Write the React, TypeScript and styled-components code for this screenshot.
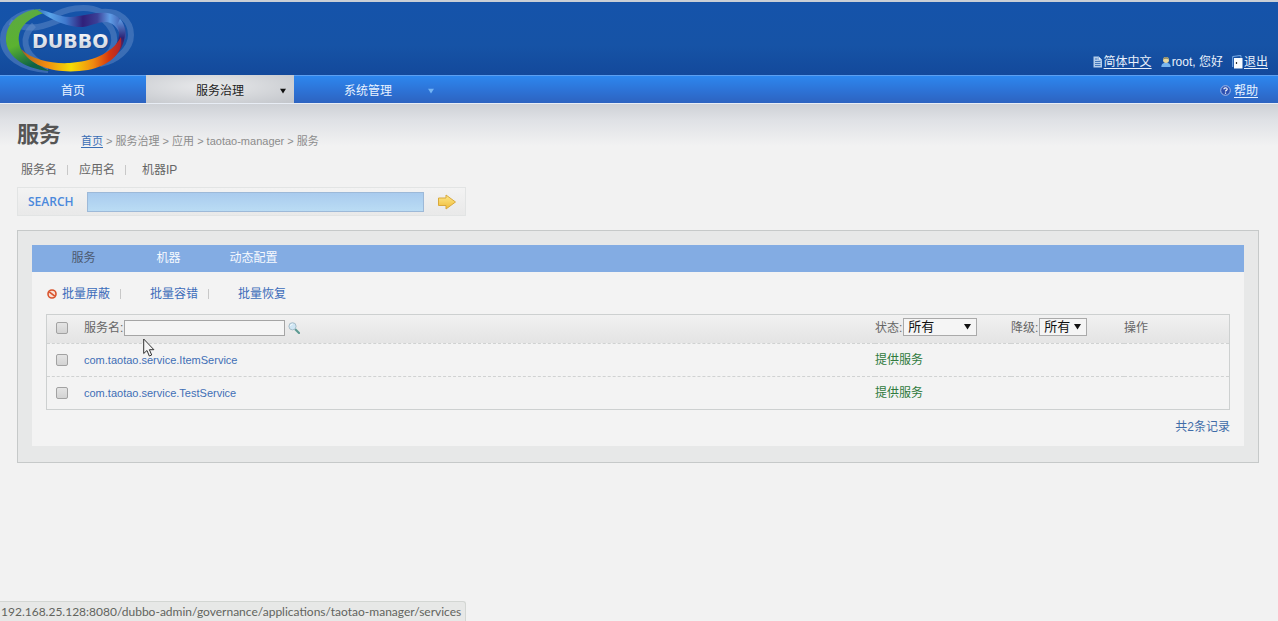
import React from 'react';
import styled, { createGlobalStyle, css } from 'styled-components';

const GlobalStyle = createGlobalStyle`
  * { box-sizing: border-box; }
  html { background: #f2f2f2; }
  body {
    margin: 0;
    color: #666;
    font: 12px/16px "Liberation Sans", "Noto Sans CJK SC", sans-serif;
  }
  a { color: inherit; text-decoration: none; }
  button, input, select { font: inherit; margin: 0; }
  svg { display: block; flex: none; }
`;

const Page = styled.div`
  min-height: 100vh;
  background: #f2f2f2 linear-gradient(#ced1d6, #dfe1e5 16px, #f2f2f2 42px) 0 104px / 100% 42px no-repeat;
`;

const Header = styled.header`
  display: flex;
  justify-content: space-between;
  height: 75px;
  padding-right: 10px;
  border-top: 2px solid #c9ced6;
  background: linear-gradient(#1553aa, #1653a6 60%, #13499b);
`;

const UserLinks = styled.div`
  display: flex;
  align-items: center;
  gap: 9px;
  align-self: flex-end;
  margin-bottom: 5px;
  color: #e9f1fb;
`;

const IconText = styled.span`
  display: flex;
  align-items: center;
  gap: 1px;
  a { text-decoration: underline; text-underline-offset: 2px; }
`;

const NavBar = styled.nav`
  display: flex;
  height: 29px;
  border-top: 1px solid #5c9ff0;
  border-bottom: 1px solid #e8edf5;
  background: linear-gradient(#2d87ee, #2d74d8 50%, #2d63c0);
`;

const NavItem = styled.a<{ $active?: boolean }>`
  display: grid;
  grid-template-columns: 22px 1fr 22px;
  align-items: center;
  justify-items: center;
  width: 148px;
  margin-top: -1px;
  padding-top: 3px;
  color: #e9f3ff;
  span { grid-column: 2; }
  &:first-child { width: 146px; }
  ${p => p.$active && css`
    color: #222;
    background: radial-gradient(ellipse at 42% 40%, #e8e9eb, #c4c7cc 95%);
  `}
`;

const Help = styled(IconText)`
  gap: 3px;
  margin-left: auto;
  padding: 2px 20px 0 0;
  color: #e9f3ff;
`;

const Main = styled.main`
  padding: 17px 19px 0 17px;
`;

const TitleRow = styled.div`
  display: flex;
  align-items: flex-end;
  gap: 20px;
  height: 28px;
`;

const Title = styled.h1`
  margin: 0;
  color: #555;
  font-size: 22px;
  line-height: 28px;
`;

const Crumbs = styled.nav`
  color: #8c8c8c;
  font-size: 11px;
  a { color: #3b6fb5; text-decoration: underline; text-underline-offset: 2px; }
`;

const FilterLinks = styled.nav`
  display: flex;
  align-items: center;
  margin: 13px 0 9px;
  padding-left: 4px;
`;

const Separator = styled.i<{ $after: number }>`
  width: 1px;
  height: 10px;
  margin: 0 ${p => p.$after}px 0 10px;
  background: #c8c8c8;
`;

const SearchBox = styled.form`
  display: flex;
  align-items: center;
  width: 449px;
  height: 29px;
  border: 1px solid #e2e4e4;
  background: linear-gradient(#f3f3f3, #e9e9e9);
  label {
    width: 69px;
    padding-left: 10px;
    color: #4a88dc;
    font: 600 12px/16px "Open Sans", sans-serif;
  }
  input {
    width: 337px;
    height: 20px;
    border: 1px solid #9db9d8;
    background: linear-gradient(#a9cbee, #badcf4);
  }
  button {
    margin-left: 13px;
    padding: 0;
    border: 0;
    background: none;
  }
`;

const Panel = styled.section`
  margin-top: 14px;
  padding: 14px 14px 16px;
  border: 1px solid #c6c9c9;
  background: #e7e8e8;
`;

const PanelBody = styled.div`
  background: #f3f3f3;
`;

const Tabs = styled.nav`
  display: flex;
  height: 27px;
  padding-left: 9px;
  background: #83ace3;
`;

const Tab = styled.a<{ $active?: boolean }>`
  width: 85px;
  line-height: 27px;
  text-align: center;
  color: ${p => (p.$active ? '#4c5a70' : '#f6f9fe')};
`;

const Actions = styled.div`
  display: flex;
  align-items: center;
  height: 42px;
  padding: 2px 0 0 15px;
  svg { margin-right: 5px; }
  button {
    padding: 0;
    border: 0;
    background: none;
    color: #3c6cba;
  }
`;

const ServiceTable = styled.table`
  width: calc(100% - 28px);
  margin: 0 14px;
  border: 1px solid #cdd0d0;
  border-collapse: separate;
  border-spacing: 0;
  table-layout: fixed;
  th, td { padding: 0; text-align: left; font-weight: normal; }
  th { padding-bottom: 2px; }
  thead tr { height: 28px; background: linear-gradient(#f1f1f1, #e4e4e4); }
  tbody tr { height: 33px; }
  tbody td { border-top: 1px dashed #d0d2d2; }
  tbody a { color: #416fb6; font-size: 11px; }
`;

const Col = styled.col<{ $width?: number }>`
  width: ${p => (p.$width ? `${p.$width}px` : 'auto')};
`;

const Check = styled.input.attrs({ type: 'checkbox' })`
  display: block;
  appearance: none;
  width: 12px;
  height: 12px;
  margin-left: 9px;
  border: 1px solid #a2a2a2;
  border-radius: 2px;
  background: linear-gradient(#e4e4e4, #d3d3d3);
`;

const Field = styled.div`
  display: flex;
  align-items: center;
  gap: 1px;
  svg { margin-left: 2px; }
`;

const NameInput = styled.input`
  width: 161px;
  height: 16px;
  border: 1px solid #a5a5a5;
  background: #f5f5f5;
`;

const SelectWrap = styled.span<{ $width: number }>`
  position: relative;
  width: ${p => p.$width}px;
  margin-top: -3px;
  select {
    display: block;
    appearance: none;
    width: 100%;
    height: 18px;
    padding: 0 4px;
    border: 1px solid #aaa;
    border-radius: 0;
    background: #f5f5f5;
    color: #111;
    font-size: 13px;
    line-height: 16px;
  }
  svg { position: absolute; right: 6px; top: 5px; pointer-events: none; }
`;

const State = styled.span`
  color: #2f7a3c;
`;

const Total = styled.p`
  margin: 0;
  padding: 9px 14px 11px 0;
  text-align: right;
  color: #3f6ca8;
`;

const StatusBar = styled.footer`
  position: fixed;
  left: 0;
  bottom: 0;
  height: 20px;
  padding: 2px 4px 0 1px;
  border: 1px solid #d3d6d3;
  border-width: 1px 1px 0 0;
  border-radius: 0 3px 0 0;
  background: #e7e8e7;
  color: #62645e;
  font: 12px/16px Lato, sans-serif;
`;

const Pointer = styled.svg`
  position: absolute;
  left: 143px;
  top: 338px;
  pointer-events: none;
`;

const Arrow = ({ color, size = 7 }: { color: string; size?: number }) => (
  <svg width={size} height={size} viewBox="0 0 7 7"><path d="M0 1h7L3.500 6.500z" fill={color} /></svg>
);

const Logo = () => (
  <svg width="136" height="73" viewBox="0 1 136 73" role="img" aria-label="DUBBO">
    <defs>
      <linearGradient id="green" x1="0" y1="0" x2="0.300" y2="1">
        <stop offset="0" stopColor="#4aa08c" /><stop offset="0.220" stopColor="#5cab3e" />
        <stop offset="0.600" stopColor="#5bb230" /><stop offset="1" stopColor="#0d6245" />
      </linearGradient>
      <linearGradient id="top">
        <stop offset="0" stopColor="#2c66b4" /><stop offset="0.150" stopColor="#5aa4e8" />
        <stop offset="0.330" stopColor="#3f78cc" /><stop offset="0.520" stopColor="#30207a" />
        <stop offset="0.680" stopColor="#3b3f96" /><stop offset="0.820" stopColor="#5f9de6" />
        <stop offset="1" stopColor="#35479c" />
      </linearGradient>
      <linearGradient id="warm">
        <stop offset="0" stopColor="#a8641c" /><stop offset="0.250" stopColor="#f08b10" />
        <stop offset="0.500" stopColor="#f5dc05" /><stop offset="0.720" stopColor="#f08a10" />
        <stop offset="0.880" stopColor="#d6360c" /><stop offset="1" stopColor="#a92433" />
      </linearGradient>
      <linearGradient id="side" x1="0" y1="0" x2="0" y2="1">
        <stop offset="0" stopColor="#5f9de6" /><stop offset="0.500" stopColor="#2b2375" />
        <stop offset="1" stopColor="#a8242a" />
      </linearGradient>
      <linearGradient id="word" x1="0" y1="0" x2="0" y2="1">
        <stop offset="0" stopColor="#fff" /><stop offset="1" stopColor="#c5ccd8" />
      </linearGradient>
    </defs>
    <g fill="none" stroke="#6a93cc" strokeOpacity="0.450" strokeWidth="6">
      <path d="M34 11C20 12 3 22 3 38C3 55 22 68 48 69" />
      <path d="M52 16C64 8 86 3 101 11C120 9 131 20 131 34C131 48 117 60 100 63" />
      <path d="M10 21C30 32 48 24 62 18" />
      <path d="M34 24C20 36 24 52 40 62" />
      <path d="M104 19C118 31 118 48 102 58" />
    </g>
    <path d="M40 8C22 9 7 20 6 37C5 53 22 68 50 70C35 63 20 54 19 41C17 27 28 17 44 12z" fill="url(#green)" />
    <path d="M36 8C50 10 58 16 70 16C84 15 100 9 112 13C121 16 127 25 126 38L121 40C121 30 114 22 107 21C98 20 88 27 77 26C62 24 50 18 36 8z" fill="url(#top)" />
    <path d="M120 18C128 26 127 44 114 56L111 50C119 43 121 32 117 24z" fill="url(#side)" />
    <path d="M21 48C32 59 52 63 70 62C91 60 111 54 121 36C124 54 107 65 88 69C62 73 33 69 21 48z" fill="url(#warm)" />
    <text x="33" y="48" fontFamily="DejaVu Sans" fontWeight="bold" fontSize="19" fill="#123b7c" fillOpacity="0.600">DUBBO</text>
    <text x="32" y="47" fontFamily="DejaVu Sans" fontWeight="bold" fontSize="19" fill="url(#word)">DUBBO</text>
  </svg>
);

const DocIcon = () => (
  <svg width="10" height="12" viewBox="0 0 10 12">
    <path d="M.5.500h5l3.500 3.500v7.500H.5z" fill="#b4cdea" /><path d="M5.500.500v3.500H9" fill="#e8f2fc" stroke="#7da3d4" strokeWidth="0.700" />
    <path d="M2 3h2.500M2 5.500h5.500M2 7.500h5.500M2 9.500h5.500" stroke="#4377bb" />
  </svg>
);

const UserIcon = () => (
  <svg width="10" height="12" viewBox="0 0 10 12">
    <path d="M.3 11C.3 8 2 6.800 5 6.800S9.700 8 9.700 11z" fill="#79b6ee" />
    <circle cx="5" cy="4" r="3" fill="#e8d9a0" /><path d="M2 3.700C2 0 8 0 8 3.700C6.500 2.500 3.500 2.500 2 3.700z" fill="#8d8a66" />
  </svg>
);

const DoorIcon = () => (
  <svg width="11" height="14" viewBox="0 0 11 14">
    <path d="M.7 12V1.500L7 .700h2v2" fill="none" stroke="#7fb0e8" />
    <path d="M2 3h8.500v10.500H2z" fill="#fafcfe" /><path d="M4.500 7v2" stroke="#333" strokeWidth="1.200" />
  </svg>
);

const HelpIcon = () => (
  <svg width="11" height="11" viewBox="0 0 11 11">
    <circle cx="5.500" cy="5.500" r="4.800" fill="#2c4fb0" stroke="#a5bbe8" />
    <path d="M3.800 4.300C3.900 2.300 7.200 2.300 7.200 4.200C7.200 5.300 5.500 5.200 5.500 6.600M5.500 7.500v1.200" fill="none" stroke="#fff" strokeWidth="1.200" />
  </svg>
);

const GoIcon = () => (
  <svg width="20" height="16" viewBox="0 0 20 16">
    <defs><linearGradient id="gold" x1="0" y1="0" x2="0" y2="1"><stop offset="0" stopColor="#fde98c" /><stop offset="1" stopColor="#f0bb38" /></linearGradient></defs>
    <path d="M1.500 4H9V1l9.500 7L9 15v-3.500H1.500z" fill="url(#gold)" stroke="#d9a93c" strokeLinejoin="round" />
  </svg>
);

const BanIcon = () => (
  <svg width="10" height="10" viewBox="0 0 10 10">
    <circle cx="5" cy="5" r="4" fill="#f8e0d6" stroke="#d9532c" strokeWidth="1.600" /><path d="M2.200 2.800l5.600 4.400" stroke="#d9532c" strokeWidth="1.600" />
  </svg>
);

const LensIcon = () => (
  <svg width="12" height="12" viewBox="0 0 12 12">
    <path d="M7 7l4 4" stroke="#5c9a92" strokeWidth="2.200" strokeLinecap="round" />
    <circle cx="4.500" cy="4.300" r="3.600" fill="#cfe6f4" stroke="#a7bdc9" /><path d="M2.500 4c.3-1.200 1-1.800 2-1.800" fill="none" stroke="#fff" />
  </svg>
);

const services = ['com.taotao.service.ItemService', 'com.taotao.service.TestService'];

export default function App() {
  return (
    <Page>
      <GlobalStyle />
      <Header>
        <Logo />
        <UserLinks>
          <IconText><DocIcon /><a href="#lang">简体中文</a></IconText>
          <IconText><UserIcon />root, 您好</IconText>
          <IconText><DoorIcon /><a href="#logout">退出</a></IconText>
        </UserLinks>
      </Header>
      <NavBar>
        <NavItem href="#home"><span>首页</span></NavItem>
        <NavItem href="#governance" $active><span>服务治理</span><Arrow color="#111" size={6} /></NavItem>
        <NavItem href="#system"><span>系统管理</span><Arrow color="#74b4f4" size={6} /></NavItem>
        <Help><HelpIcon /><a href="#help">帮助</a></Help>
      </NavBar>
      <Main>
        <TitleRow>
          <Title>服务</Title>
          <Crumbs><a href="#home">首页</a> &gt; 服务治理 &gt; 应用 &gt; taotao-manager &gt; 服务</Crumbs>
        </TitleRow>
        <FilterLinks>
          <a href="#service">服务名</a><Separator $after={11} />
          <a href="#application">应用名</a><Separator $after={16} />
          <a href="#machine">机器IP</a>
        </FilterLinks>
        <SearchBox>
          <label htmlFor="keyword">SEARCH</label>
          <input id="keyword" type="text" />
          <button type="button" aria-label="SEARCH"><GoIcon /></button>
        </SearchBox>
        <Panel>
          <PanelBody>
            <Tabs>
              <Tab href="#services" $active>服务</Tab>
              <Tab href="#machines">机器</Tab>
              <Tab href="#config">动态配置</Tab>
            </Tabs>
            <Actions>
              <BanIcon />
              <button type="button">批量屏蔽</button><Separator $after={29} />
              <button type="button">批量容错</button><Separator $after={29} />
              <button type="button">批量恢复</button>
            </Actions>
            <ServiceTable>
              <colgroup>
                <Col $width={37} /><Col /><Col $width={136} /><Col $width={113} /><Col $width={105} />
              </colgroup>
              <thead>
                <tr>
                  <th><Check aria-label="全选" /></th>
                  <th><Field><label htmlFor="name">服务名:</label><NameInput id="name" type="text" /><LensIcon /></Field></th>
                  <th>
                    <Field><label htmlFor="state">状态:</label>
                      <SelectWrap $width={74}><select id="state"><option>所有</option></select><Arrow color="#111" /></SelectWrap>
                    </Field>
                  </th>
                  <th>
                    <Field><label htmlFor="level">降级:</label>
                      <SelectWrap $width={48}><select id="level"><option>所有</option></select><Arrow color="#111" /></SelectWrap>
                    </Field>
                  </th>
                  <th>操作</th>
                </tr>
              </thead>
              <tbody>
                {services.map(name => (
                  <tr key={name}>
                    <td><Check aria-label={name} /></td>
                    <td><a href={`#${name}`}>{name}</a></td>
                    <td><State>提供服务</State></td>
                    <td />
                    <td />
                  </tr>
                ))}
              </tbody>
            </ServiceTable>
            <Total>共2条记录</Total>
          </PanelBody>
        </Panel>
      </Main>
      <StatusBar>192.168.25.128:8080/dubbo-admin/governance/applications/taotao-manager/services</StatusBar>
      <Pointer width="12" height="19" viewBox="0 0 12 19">
        <path d="M.7 1v14.500l3.300-3 2.300 5.500 2.400-1-2.300-5.300h4.500z" fill="#f5f5f5" stroke="#333" />
      </Pointer>
    </Page>
  );
}
